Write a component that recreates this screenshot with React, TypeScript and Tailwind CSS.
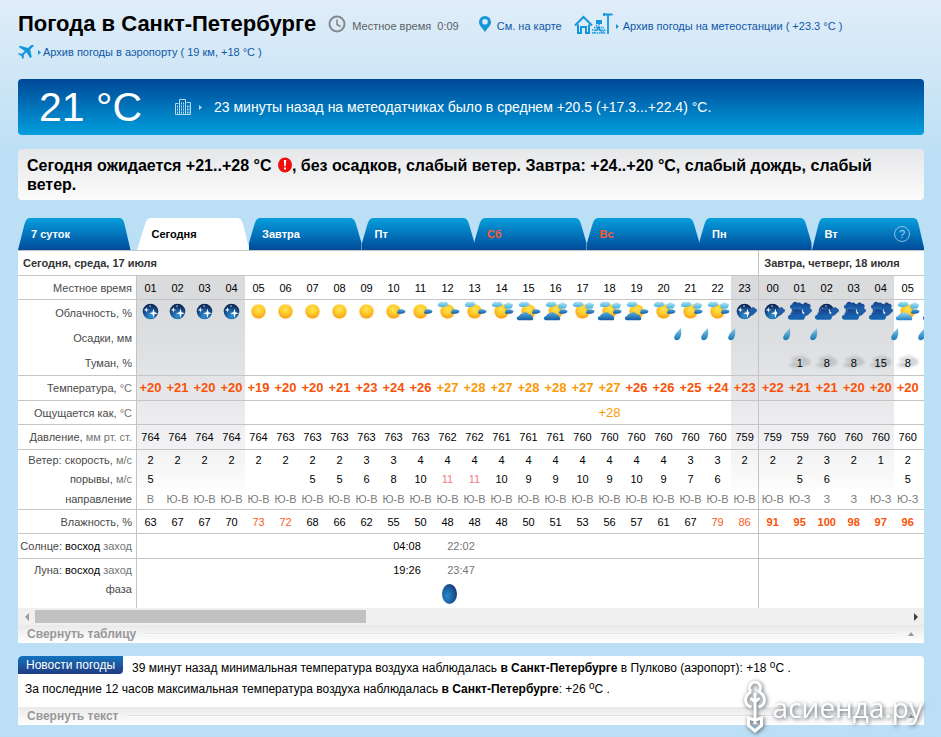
import type { ReactNode } from 'react';
import clsx from 'clsx';

type Sky = {
  night?: boolean;
  high?: boolean;
  low?: boolean;
  pale?: boolean;
  mid?: number;
};

type Hour = {
  hour: string;
  sky: Sky;
  temp: string;
  pressure: string;
  wind: string;
  gust?: string;
  dir: string;
  humidity: string;
  rain?: boolean;
  fog?: string;
  feels?: string;
};

const NIGHT: Sky = { night: true };
const SUN: Sky = {};

const hours: Hour[] = [
  { hour: '01', sky: NIGHT, temp: '+20', pressure: '764', wind: '2', gust: '5', dir: 'В', humidity: '63' },
  { hour: '02', sky: NIGHT, temp: '+21', pressure: '764', wind: '2', dir: 'Ю-В', humidity: '67' },
  { hour: '03', sky: NIGHT, temp: '+20', pressure: '764', wind: '2', dir: 'Ю-В', humidity: '67' },
  { hour: '04', sky: NIGHT, temp: '+20', pressure: '764', wind: '2', dir: 'Ю-В', humidity: '70' },
  { hour: '05', sky: SUN, temp: '+19', pressure: '764', wind: '2', dir: 'Ю-В', humidity: '73' },
  { hour: '06', sky: SUN, temp: '+20', pressure: '763', wind: '2', dir: 'Ю-В', humidity: '72' },
  { hour: '07', sky: SUN, temp: '+20', pressure: '763', wind: '2', gust: '5', dir: 'Ю-В', humidity: '68' },
  { hour: '08', sky: SUN, temp: '+21', pressure: '763', wind: '2', gust: '5', dir: 'Ю-В', humidity: '66' },
  { hour: '09', sky: SUN, temp: '+23', pressure: '763', wind: '3', gust: '6', dir: 'Ю-В', humidity: '62' },
  { hour: '10', sky: { mid: 1 }, temp: '+24', pressure: '763', wind: '3', gust: '8', dir: 'Ю-В', humidity: '55' },
  { hour: '11', sky: { mid: 1 }, temp: '+26', pressure: '763', wind: '4', gust: '10', dir: 'Ю-В', humidity: '50' },
  { hour: '12', sky: { high: true, mid: 1 }, temp: '+27', pressure: '762', wind: '4', gust: '11', dir: 'Ю-В', humidity: '48' },
  { hour: '13', sky: { high: true, mid: 1 }, temp: '+28', pressure: '762', wind: '4', gust: '11', dir: 'Ю-В', humidity: '48' },
  { hour: '14', sky: { high: true, mid: 2 }, temp: '+27', pressure: '761', wind: '4', gust: '10', dir: 'Ю-В', humidity: '48' },
  { hour: '15', sky: { high: true, low: true, mid: 1 }, temp: '+28', pressure: '761', wind: '4', gust: '9', dir: 'Ю-В', humidity: '50' },
  { hour: '16', sky: { high: true, low: true, mid: 2 }, temp: '+28', pressure: '761', wind: '4', gust: '9', dir: 'Ю-В', humidity: '51' },
  { hour: '17', sky: { high: true, mid: 2 }, temp: '+27', pressure: '760', wind: '4', gust: '10', dir: 'Ю-В', humidity: '53' },
  { hour: '18', sky: { high: true, low: true, mid: 2 }, temp: '+27', pressure: '760', wind: '4', gust: '9', dir: 'Ю-В', humidity: '56', feels: '+28' },
  { hour: '19', sky: { high: true, low: true, mid: 1 }, temp: '+26', pressure: '760', wind: '4', gust: '10', dir: 'Ю-В', humidity: '57' },
  { hour: '20', sky: { high: true, mid: 2 }, temp: '+26', pressure: '760', wind: '4', gust: '9', dir: 'Ю-В', humidity: '61' },
  { hour: '21', sky: { high: true, mid: 2 }, temp: '+25', pressure: '760', wind: '3', gust: '7', dir: 'Ю-В', humidity: '67', rain: true },
  { hour: '22', sky: { high: true, mid: 2 }, temp: '+24', pressure: '760', wind: '3', gust: '6', dir: 'Ю-В', humidity: '79', rain: true },
  { hour: '23', sky: { night: true, mid: 1 }, temp: '+23', pressure: '759', wind: '2', dir: 'Ю-В', humidity: '86', rain: true },
  { hour: '00', sky: { night: true, mid: 1 }, temp: '+22', pressure: '759', wind: '2', dir: 'Ю-В', humidity: '91' },
  { hour: '01', sky: { night: true, high: true, low: true, mid: 2 }, temp: '+21', pressure: '759', wind: '2', gust: '5', dir: 'Ю-З', humidity: '95', rain: true, fog: '1' },
  { hour: '02', sky: { night: true, low: true, mid: 1 }, temp: '+21', pressure: '760', wind: '3', gust: '6', dir: 'З', humidity: '100', rain: true, fog: '8' },
  { hour: '03', sky: { night: true, high: true, low: true, mid: 2 }, temp: '+20', pressure: '760', wind: '2', dir: 'З', humidity: '98', fog: '8' },
  { hour: '04', sky: { night: true, high: true, low: true, mid: 2 }, temp: '+20', pressure: '760', wind: '1', dir: 'Ю-З', humidity: '97', fog: '15' },
  { hour: '05', sky: { high: true, low: true, pale: true, mid: 2 }, temp: '+20', pressure: '760', wind: '2', gust: '5', dir: 'Ю-З', humidity: '96', rain: true, fog: '8' },
  { hour: '', sky: { high: true, low: true, mid: 2 }, temp: '', pressure: '', wind: '', dir: '', humidity: '', rain: true },
];

const TODAY_COUNT = 23;

const tabs = [
  { label: 'Завтра' },
  { label: 'Пт' },
  { label: 'Сб', weekend: true },
  { label: 'Вс', weekend: true },
  { label: 'Пн' },
  { label: 'Вт', help: true },
];

function Defs() {
  return (
    <svg className="absolute h-0 w-0" aria-hidden="true">
      <defs>
        <radialGradient id="sun" cx="0.5" cy="0.35" r="0.65">
          <stop offset="0" stopColor="#ffe650" />
          <stop offset="0.55" stopColor="#ffc928" />
          <stop offset="1" stopColor="#f79a1c" />
        </radialGradient>
        <radialGradient id="nightSky" cx="0.5" cy="0.8" r="0.75">
          <stop offset="0" stopColor="#2f94d2" />
          <stop offset="0.5" stopColor="#1b5a9c" />
          <stop offset="1" stopColor="#0b2350" />
        </radialGradient>
        <linearGradient id="cloudDay" x1="0" y1="0" x2="0" y2="1">
          <stop offset="0" stopColor="#55aede" />
          <stop offset="1" stopColor="#1258a5" />
        </linearGradient>
        <linearGradient id="cloudPale" x1="0" y1="0" x2="0" y2="1">
          <stop offset="0" stopColor="#9edaf4" />
          <stop offset="1" stopColor="#2181c4" />
        </linearGradient>
        <linearGradient id="cloudHigh" x1="0" y1="0" x2="0" y2="1">
          <stop offset="0" stopColor="#b4e4f6" />
          <stop offset="1" stopColor="#45b2e0" />
        </linearGradient>
        <linearGradient id="cloudNight" x1="0" y1="0" x2="0" y2="1">
          <stop offset="0" stopColor="#17408a" />
          <stop offset="1" stopColor="#1d68b4" />
        </linearGradient>
        <linearGradient id="drop" x1="0" y1="0" x2="0" y2="1">
          <stop offset="0" stopColor="#8ccbe6" />
          <stop offset="1" stopColor="#1678b8" />
        </linearGradient>
        <radialGradient id="moon" cx="0.35" cy="0.6" r="0.7">
          <stop offset="0" stopColor="#2b8ccb" />
          <stop offset="0.6" stopColor="#195c9e" />
          <stop offset="1" stopColor="#123a70" />
        </radialGradient>
        <linearGradient id="tabBlue" x1="0" y1="0" x2="0" y2="1">
          <stop offset="0" stopColor="#069fdd" />
          <stop offset="1" stopColor="#004a99" />
        </linearGradient>
      </defs>
    </svg>
  );
}

function NightClouds({ sky }: { sky: Sky }) {
  const mid = sky.mid ?? 0;
  return (
    <g fill="url(#cloudNight)">
      {mid > 1 && <path d="M16 9c-2-1-1.500-4 1-4.200.5-2.500 3.500-3 4.700-1 2.800-.5 4 3 2 4.500-1 1-6 1.500-7.700.7z" />}
      {sky.high && <path d="M6 9c-3-.5-2.500-4.500.2-4.500C6.500 1.500 10 .8 11.500 3c2-1.300 4.500.3 4 2.500 1.200 1 .6 3-.8 3.500z" />}
      {mid > 0 && (
        <path
          d="M19 15.500c-1.500-1-1-3 0-3.500-2-1.500-.8-3.800 1-3.800 1-1.500 4-1.200 4.500.6 2.200.7 1.800 3.500-.5 4-1.200 2-3 3.400-5 2.700z"
          fill="#1f5da8"
        />
      )}
      {sky.low && (
        <>
          <path
            d="M4 19.500c-3-.5-2.300-4.500.5-4.700-.5-2 1.200-3 2.300-2.600C6.500 8.500 9.500 7.500 12 9c3.200-.8 5 2 4.200 4.200 3 1.300 3.300 5.600 1 6.300z"
            stroke="#7fb4de"
            strokeOpacity="0.55"
            strokeWidth="0.6"
          />
          <path d="M4 19.500c-3-.5-2.300-4 .5-4.400 4 1.500 8 .5 11.700-1.800 3 1.300 3.300 5.500 1 6.200z" fill="#1762ae" />
        </>
      )}
    </g>
  );
}

function DayClouds({ sky }: { sky: Sky }) {
  const mid = sky.mid ?? 0;
  return (
    <>
      {sky.high && <path d="M6.500 7C3.500 7 3 3.500 5 3.300 6 1.200 8.500 1.200 9.500 2.200c1-1 3.200-.8 3.800.9 1.900.3 1.500 2.300-.3 2.600-1 1.100-3.500 1.300-6.500 1.300z" fill="url(#cloudHigh)" />}
      {mid > 1 && <path d="M17.500 8.500c-1.700-.3-1.800-1.700-.8-2.200-1.300-1.300 0-3 1.600-2.800 1-1.500 3.500-1.300 4.300 0 2.400-.2 3.300 2 1.500 3 .3 1.500-1 2-2 2z" fill="url(#cloudHigh)" />}
      {mid > 0 && <path d="M18.500 13.800c-1.600 0-2-1.500-.9-2.200C17 9.500 19.500 9 20.500 9.600c1.500-.9 2.600.1 3 .4 2.300-.2 2.500 2.700.6 2.900-1.200.9-3.600.9-5.600.9z" fill="url(#cloudDay)" />}
      {sky.low && (
        <path
          d="M4 20.300c-3-.3-2.700-4.300.3-4.300.2-1.900 1.700-2.600 3-2.300 1.500-2.200 5.500-2 6.700.5 2.300.2 3.200 1.500 3.200 2.500 1.700.7 1.300 3.300-.4 3.600z"
          fill={sky.pale ? 'url(#cloudPale)' : 'url(#cloudDay)'}
        />
      )}
    </>
  );
}

function SkyIcon({ sky }: { sky: Sky }) {
  return (
    <svg viewBox="0 0 27 22" className="block h-[22px] w-[27px] overflow-visible" aria-hidden="true">
      {sky.night ? (
        <>
          <circle cx="13.5" cy="11.5" r="7.800" fill="url(#nightSky)" />
          <path d="M16.500 8.500l1 3.800 3.500 1-3.500 1-1 3.800-1-3.800-3.500-1 3.500-1z" fill="#fff" />
          <path d="M9.300 7l.6 2.300 2.200.6-2.200.6-.6 2.300-.6-2.300-2.200-.6 2.200-.6z" fill="#fff" />
          <circle cx="13" cy="6" r="0.8" fill="#bfe2f5" />
          <NightClouds sky={sky} />
        </>
      ) : (
        <>
          <circle cx="13.5" cy="11.500" r="8" fill="#ffe9a8" opacity="0.55" />
          <circle cx="13.500" cy="11.500" r="7" fill="url(#sun)" />
          <DayClouds sky={sky} />
        </>
      )}
    </svg>
  );
}

function RainDrop() {
  return (
    <svg viewBox="0 0 27 14" className="block h-3.5 w-[27px] overflow-visible" aria-hidden="true">
      <path d="M4 0c.6 4.500.3 8-1.200 10.500C1 13-3 12.800-2.800 9.500-2.500 6.300.8 3.500 4 0z" fill="url(#drop)" />
    </svg>
  );
}

function FogMark({ value }: { value: string }) {
  return (
    <div className="relative">
      <svg viewBox="0 0 27 16" className="absolute inset-x-0 top-0 h-4 w-[27px] overflow-visible" aria-hidden="true">
        <g fill="#8d949c" className="blur-[1px]">
          <ellipse cx="9" cy="4.500" rx="3.500" ry="2.500" opacity="0.3" />
          <ellipse cx="8" cy="10" rx="5" ry="2.500" opacity="0.3" />
          <ellipse cx="15" cy="3" rx="5" ry="3" opacity="0.25" />
          <ellipse cx="20" cy="7" rx="4.500" ry="4" opacity="0.35" />
          <ellipse cx="13" cy="10" rx="6" ry="3" opacity="0.25" />
        </g>
      </svg>
      <span className="relative">{value}</span>
    </div>
  );
}

function Clock() {
  return (
    <svg viewBox="0 0 18 18" className="h-[18px] w-[18px]" fill="none" stroke="#84898e" strokeWidth="2" aria-hidden="true">
      <circle cx="9" cy="9" r="7.500" />
      <path d="M9 4.500V9.500l3.500 2" strokeWidth="1.600" />
    </svg>
  );
}

function Pin() {
  return (
    <svg viewBox="0 0 12 16" className="h-4 w-3" aria-hidden="true">
      <path d="M6 0a6 6 0 0 0-6 6c0 3.500 3 5.500 6 10 3-4.500 6-6.500 6-10a6 6 0 0 0-6-6zm0 3a2.800 2.800 0 1 1 0 5.600A2.800 2.800 0 0 1 6 3z" fill="#1596dc" fillRule="evenodd" />
    </svg>
  );
}

function Station() {
  return (
    <svg viewBox="0 0 40 22" className="h-[22px] w-10" fill="none" stroke="#1596dc" strokeWidth="2" aria-hidden="true">
      <path d="M1 12.500L9.500 4l8.500 8.500M4 11.500v8.500h3v-6h5v6h3v-8.500" />
      <path d="M22 7h6v4h-6z" fill="#1596dc" stroke="none" />
      <path d="M25 11v3M20 14.500h10M18 17h13M18 20h14M20 20l4-5 4 5 4-4M22 12l6 6" strokeWidth="1.300" strokeDasharray="1.500 0.800" />
      <path d="M34 21V2M29.500 1.500h9M30 0v3" strokeWidth="1.800" />
    </svg>
  );
}

function Plane() {
  return (
    <svg viewBox="0 0 16 14" className="h-3.5 w-4" fill="#1596dc" aria-hidden="true">
      <path d="M15.500.2c-1.200-.6-2.400 0-3.300.8L10 3 2 .8.800 2l6 4-2.900 2.700-3.300-.4L0 9.300l3.200 1.500L4.600 14l1.200-.8v-3.400l2.700-2.600L12.200 13l1.500-1.100-1.500-7.600 2.600-2.200C15.500 1.400 15.800.8 15.500.2z" />
    </svg>
  );
}

function Building() {
  return (
    <svg viewBox="0 0 16 16" className="h-4 w-4" fill="none" stroke="#b5d9f1" aria-hidden="true">
      <path d="M.5 15.500v-11h3M.5 15.500h15v-12h-4M4.500 15.500V.5h6v15" />
      <path d="M2.500 6.500v8M6.500 3.500v11M8.500 3.500v11M12.500 6.500v8M14 6.500v8" strokeDasharray="2 1" />
    </svg>
  );
}

function Marker({ className }: { className: string }) {
  return (
    <svg viewBox="0 0 3 5" className={clsx('h-[5px] w-[3px]', className)} aria-hidden="true">
      <path d="M0 0l3 2.500L0 5z" fill="currentColor" />
    </svg>
  );
}

function Alert() {
  return (
    <svg viewBox="0 0 14 16" className="-mt-1 ml-0.5 inline-block h-4 w-3.5" role="img" aria-label="!">
      <ellipse cx="7" cy="8" rx="7" ry="7.500" fill="#f20d0d" />
      <path d="M5.800 3h2.400l-.5 6.200H6.300zM6 10.500h2v2H6z" fill="#fff" />
    </svg>
  );
}

function TabShape({ active, first }: { active?: boolean; first?: boolean }) {
  let d = 'M0 32V25L5.500 6C7 1.500 8.500 0 12 0H100C103.500 0 105 1.500 106.500 6L112 25V32z';
  if (active) d = 'M0 32L8 6C9.500 1.500 11 0 14 0H99C102.500 0 104 1.500 105.500 6L112 32z';
  if (first) d = 'M0 32L6.500 6C8 1.500 9.500 0 12 0H100C103.500 0 105 1.500 106 6L112 32z';
  return (
    <svg viewBox="0 0 112 32" preserveAspectRatio="none" className="absolute inset-0 h-full w-full" aria-hidden="true">
      <path d={d} fill={active ? '#fff' : 'url(#tabBlue)'} />
    </svg>
  );
}

function Tabs() {
  return (
    <nav className="flex h-8 text-[11px] font-bold text-white">
      <button className="relative mr-1.5 flex-1 text-left">
        <TabShape first />
        <span className="relative block pl-[13px]">7 суток</span>
      </button>
      <button className="relative flex-1 text-left text-black">
        <TabShape active />
        <span className="relative block pl-[15px]">Сегодня</span>
      </button>
      {tabs.map((tab) => (
        <button key={tab.label} className={clsx('relative flex-1', tab.weekend && 'text-[#ff5a2b]')}>
          <TabShape first={tab.help} />
          <span className="relative flex items-center justify-between pr-3.5 pl-[13px]">
            {tab.label}
            {tab.help && (
              <span className="flex h-4 w-4 items-center justify-center rounded-full border border-[#8cc0e4] font-normal text-[#a9d2ee]">?</span>
            )}
          </span>
        </button>
      ))}
    </nav>
  );
}

type RowProps = {
  label: ReactNode;
  height: string;
  shade?: string;
  line?: boolean;
  className?: string;
  cell: (h: Hour) => ReactNode;
};

function Row({ label, height, shade = '', line, className, cell }: RowProps) {
  return (
    <tr className={height}>
      <th scope="row" className={clsx('border-r border-[#c4c4c4] p-0 pr-1 text-right font-normal whitespace-nowrap text-[#4a4a4a]', line && 'border-b')}>
        {label}
      </th>
      {hours.map((h, i) => (
        <td
          key={i}
          className={clsx(
            'border-[#c4c4c4] p-0 text-center',
            line && 'border-b',
            i === TODAY_COUNT && 'border-l',
            h.sky.night && shade,
            className,
          )}
        >
          {cell(h)}
        </td>
      ))}
    </tr>
  );
}

function tempColor(t: string) {
  return Number(t) >= 27 ? 'text-[#fb9804]' : 'text-[#fa5207]';
}

function humidityClass(v: string) {
  const n = Number(v);
  if (n > 90) return 'font-bold text-[#fa5207]';
  if (n > 70) return 'text-[#fa5a20]';
  return '';
}

function Unit({ children }: { children: ReactNode }) {
  return <span className="text-[#757575]">{children}</span>;
}

function SunTimesRow({ label, rise, set, height, line }: { label: string; rise: string; set: string; height: string; line?: boolean }) {
  const edge = line ? 'border-b border-[#c4c4c4]' : 'border-[#c4c4c4]';
  return (
    <tr className={height}>
      <th scope="row" className={clsx('border-r p-0 pr-1 text-right font-normal whitespace-nowrap text-[#4a4a4a]', edge)}>
        {label}: <span className="text-black">восход</span> <Unit>заход</Unit>
      </th>
      <td colSpan={9} className={edge} />
      <td colSpan={2} className={clsx('p-0 text-center', edge)}>{rise}</td>
      <td colSpan={2} className={clsx('p-0 text-center text-[#757575]', edge)}>{set}</td>
      <td colSpan={10} className={edge} />
      <td colSpan={7} className={clsx('border-l', edge)} />
    </tr>
  );
}

function ForecastTable() {
  return (
    <div className="overflow-hidden border-t border-[#c4c4c4] bg-white">
      <table className="w-[930px] table-fixed border-separate border-spacing-0 text-[11px] leading-4 text-black">
        <colgroup>
          <col className="w-[119px]" />
          {hours.map((_, i) => (
            <col key={i} className={i === TODAY_COUNT ? 'w-7' : 'w-[27px]'} />
          ))}
        </colgroup>
        <thead>
          <tr className="h-[25px] text-left text-[#333]">
            <th colSpan={TODAY_COUNT + 1} className="border-b border-[#c4c4c4] p-0 pl-[5px]">Сегодня, среда, 17 июля</th>
            <th colSpan={7} className="border-b border-l border-[#c4c4c4] p-0 pl-[5px]">Завтра, четверг, 18 июля</th>
          </tr>
        </thead>
        <tbody>
          <Row label="Местное время" height="h-6" shade="bg-[#dadbdd]" line cell={(h) => h.hour} />
          <Row label="Облачность, %" height="h-[25px]" className="align-top" shade="bg-linear-to-b from-[#dadbdd] to-[#dcdddf]" cell={(h) => <SkyIcon sky={h.sky} />} />
          <Row label="Осадки, мм" height="h-[25px]" className="align-top pt-[3px]" shade="bg-linear-to-b from-[#dcdddf] to-[#dfe0e2]" cell={(h) => h.rain && <RainDrop />} />
          <Row label="Туман, %" height="h-[26px]" line shade="bg-linear-to-b from-[#dfe0e2] to-[#e3e4e6]" cell={(h) => h.fog && <FogMark value={h.fog} />} />
          <Row
            label={<>Температура, <Unit>°C</Unit></>}
            height="h-[25px]"
            line
            className="text-[13px] font-bold"
            shade="bg-linear-to-b from-[#e4e4e7] to-[#e7e7ea]"
            cell={(h) => <span className={tempColor(h.temp)}>{h.temp}</span>}
          />
          <Row
            label={<>Ощущается как, <Unit>°C</Unit></>}
            height="h-6"
            line
            className="text-[13px]"
            shade="bg-linear-to-b from-[#e9e9eb] to-[#ededef]"
            cell={(h) => h.feels && <span className={tempColor(h.feels)}>{h.feels}</span>}
          />
          <Row label={<>Давление, <Unit>мм рт. ст.</Unit></>} height="h-[25px]" line shade="bg-linear-to-b from-[#efeff1] to-[#f2f2f4]" cell={(h) => h.pressure} />
          <Row label={<>Ветер: скорость, <Unit>м/с</Unit></>} height="h-[19px]" shade="bg-linear-to-b from-[#f3f3f5] to-[#f7f7f8]" cell={(h) => h.wind} />
          <Row
            label={<>порывы, <Unit>м/с</Unit></>}
            height="h-[19px]"
            shade="bg-linear-to-b from-[#f7f7f8] to-[#fcfcfc]"
            cell={(h) => <span className={h.gust === '11' ? 'text-[#f57a80]' : ''}>{h.gust}</span>}
          />
          <Row label="направление" height="h-[22px]" line className="text-[#7c7c7c]" cell={(h) => h.dir} />
          <Row label="Влажность, %" height="h-6" line cell={(h) => <span className={humidityClass(h.humidity)}>{h.humidity}</span>} />
          <SunTimesRow label="Солнце" rise="04:08" set="22:02" height="h-[25px]" line />
          <SunTimesRow label="Луна" rise="19:26" set="23:47" height="h-[22px]" />
          <tr className="h-[27px]">
            <th scope="row" className="border-r border-[#c4c4c4] p-0 pr-1 text-right align-top font-normal text-[#4a4a4a]">фаза</th>
            <td colSpan={11} />
            <td className="p-0 align-top">
              <svg viewBox="0 0 27 24" className="block h-6 w-[27px]" role="img" aria-label="Фаза луны">
                <ellipse cx="15.500" cy="13" rx="7.500" ry="10" fill="url(#moon)" />
              </svg>
            </td>
            <td colSpan={11} />
            <td colSpan={7} className="border-l border-[#c4c4c4]" />
          </tr>
        </tbody>
      </table>
    </div>
  );
}

function ScrollTrack() {
  return (
    <div className="flex h-[17px] items-center bg-[#f0f0f0]">
      <button className="flex h-full w-[17px] items-center justify-center" aria-label="Назад">
        <svg viewBox="0 0 4 8" className="h-2 w-1" fill="#9b9b9b"><path d="M4 0v8L0 4z" /></svg>
      </button>
      <div className="h-[13px] flex-1">
        <div className="h-full w-[38%] bg-[#c1c1c1]" />
      </div>
      <button className="flex h-full w-[17px] items-center justify-center" aria-label="Вперёд">
        <svg viewBox="0 0 4 8" className="h-2 w-1" fill="#404040"><path d="M0 0v8l4-4z" /></svg>
      </button>
    </div>
  );
}

function CollapseBar({ label }: { label: string }) {
  return (
    <button className="flex h-[18px] w-full items-center bg-linear-to-b from-[#e9e9e9] to-white pr-2.5 pl-[9px] text-xs leading-4 font-bold text-[#989898]">
      {label}
      <span className="mr-3.5 ml-2.5 h-0.5 flex-1 border-b border-white bg-[#e2e2e2]" />
      <svg viewBox="0 0 6 4" className="h-1 w-1.5" fill="#989898" aria-hidden="true"><path d="M3 0l3 4H0z" /></svg>
    </button>
  );
}

function Degree() {
  return (
    <>
      <sup className="-top-1 text-[10px] leading-none">o</sup>C
    </>
  );
}

function Watermark() {
  return (
    <div className="absolute right-[18px] bottom-1 flex items-center gap-1.5 text-white drop-shadow-[1px_1px_2px_rgba(60,70,80,0.9)]">
      <svg viewBox="0 0 24 52" className="h-[52px] w-6" fill="none" stroke="#fff" strokeWidth="3" aria-hidden="true">
        <path d="M8 10.500a5.500 5.500 0 1 1 8 0c3 2 5.500 4.500 5.500 8.500a7 7 0 0 1-6 7M8 10.500c-3 2-5.500 4.500-5.500 8.500a7 7 0 0 0 6 7M12 12v31M7.500 17l4.500 4 4.500-4" />
        <path d="M5.500 37v7.500l6.500 5.500 6.500-5.500V37l-4.500 1.500h-4z" />
      </svg>
      <span className="font-['Open_Sans',sans-serif] text-[28px] leading-[40px]">асиенда.ру</span>
    </div>
  );
}

export default function App() {
  return (
    <div className="relative min-h-screen bg-[#bbdff5] bg-linear-to-b from-[#e0edf8] to-[#bbdff5] to-[160px] pr-[17px] pl-[18px] font-['Liberation_Sans',Arial,sans-serif] text-black">
      <Defs />
      <header className="flex h-[79px] flex-col pt-2.5 text-[11px] leading-4">
        <div className="flex h-7 items-center">
          <h1 className="text-[22px] leading-7 font-bold whitespace-nowrap">Погода в Санкт-Петербурге</h1>
          <div className="ml-3 flex items-center gap-1.5 whitespace-nowrap text-[#5a5f66]">
            <Clock />
            <span className="pt-1">Местное время&nbsp; 0:09</span>
          </div>
          <a href="#map" className="ml-5 flex items-center gap-1.5 whitespace-nowrap text-[#0f58a8]">
            <Pin />
            <span className="pt-1">См. на карте</span>
          </a>
          <a href="#station" className="ml-3 flex items-center whitespace-nowrap text-[#0f58a8]">
            <Station />
            <Marker className="mt-1 mr-1 ml-0.5 text-[#1596dc]" />
            <span className="pt-1">Архив погоды на метеостанции ( +23.3 °C )</span>
          </a>
        </div>
        <a href="#airport" className="mt-1.5 flex items-center self-start text-[#0f58a8]">
          <Plane />
          <Marker className="mr-0.5 ml-1 text-[#1596dc]" />
          Архив погоды в аэропорту ( 19 км, +18 °C )
        </a>
      </header>

      <main>
        <section className="flex h-14 items-center rounded bg-linear-to-b from-[#014896] to-[#04a0de] pl-[21px] text-white">
          <span className="w-[136px] text-[41px] leading-[56px] whitespace-nowrap">21 °C</span>
          <Building />
          <Marker className="mr-3 ml-2 text-[#b5d9f1]" />
          <a href="#sensors" className="text-sm">23 минуты назад на метеодатчиках было в среднем +20.5 (+17.3...+22.4) °C.</a>
        </section>

        <section className="mt-3.5 rounded bg-linear-to-b from-[#e6e7e9] to-[#fbfbfb] px-[9px] pt-[7px] pb-1.5">
          <p className="text-base leading-[19px] font-bold">
            Сегодня ожидается +21..+28 °C <Alert />, без осадков, слабый ветер. Завтра: +24..+20 °C, слабый дождь, слабый ветер.
          </p>
        </section>

        <section className="mt-[18px]">
          <Tabs />
          <ForecastTable />
          <ScrollTrack />
          <CollapseBar label="Свернуть таблицу" />
        </section>

        <section className="mt-[13px] overflow-hidden rounded-t bg-white">
          <div className="flex h-[22px] items-start text-xs leading-[18px]">
            <h2 className="mr-[9px] rounded-tl rounded-br bg-linear-to-b from-[#1273bf] to-[#1d3c82] px-2 whitespace-nowrap text-white">Новости погоды</h2>
            <p className="pt-[3px]">
              39 минут назад минимальная температура воздуха наблюдалась <b>в Санкт-Петербурге</b> в Пулково (аэропорт): +18 <Degree /> .
            </p>
          </div>
          <p className="h-[29px] pl-[7px] text-xs leading-[22px]">
            За последние 12 часов максимальная температура воздуха наблюдалась <b>в Санкт-Петербурге</b>: +26 <Degree /> .
          </p>
          <CollapseBar label="Свернуть текст" />
        </section>
      </main>
      <Watermark />
    </div>
  );
}
